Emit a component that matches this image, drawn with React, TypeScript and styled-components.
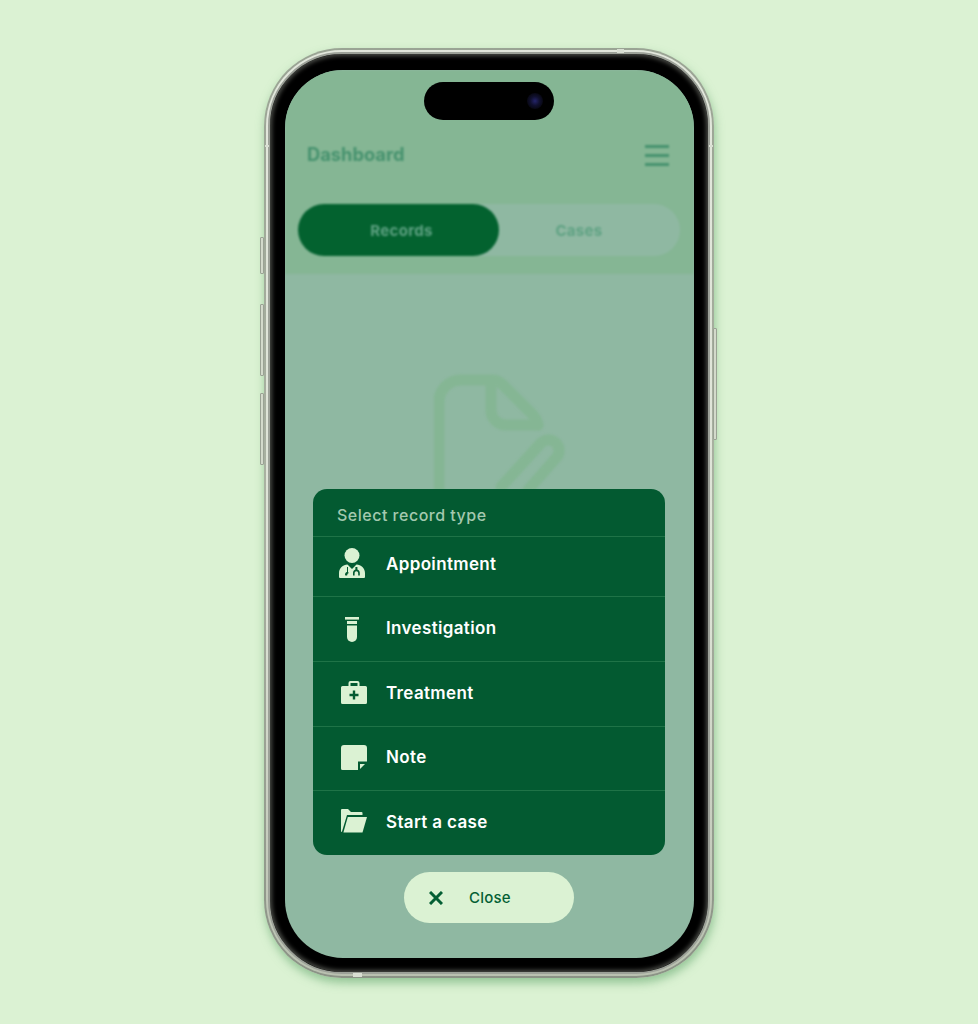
import React from "react";
import styled, { createGlobalStyle } from "styled-components";

const Global = createGlobalStyle`
  html, body {
    margin: 0;
    padding: 0;
    height: 1024px;
    overflow: hidden;
    background: #dbf2d3;
    font-family: Inter, "Noto Sans", sans-serif;
  }
`;

const Page = styled.div`
  width: 978px;
  height: 1024px;
  padding-top: 48px;
  box-sizing: border-box;
  display: flex;
  justify-content: center;
  align-items: flex-start;
`;

const Phone = styled.div`
  position: relative;
  width: 450px;
  height: 930px;
  box-sizing: border-box;
  padding: 2px;
  border-radius: 78px;
  background: linear-gradient(180deg, #9aa494 0%, #aab2a2 50%, #8b9386 100%);
  box-shadow: 1px 5px 10px rgba(90, 160, 100, 0.55);
`;

const Rim = styled.div`
  height: 100%;
  box-sizing: border-box;
  padding: 2px;
  border-radius: 76px;
  background: linear-gradient(180deg, #e2e7dc 0%, #dde3d6 60%, #b9c0b0 100%);
`;

const Bezel = styled.div`
  height: 100%;
  box-sizing: border-box;
  padding: 16px 14px 14px 15px;
  border: 2px solid #9ca198;
  border-radius: 74px;
  background: #000;
  box-shadow: inset 0 0 4px 2px #4a4c47;
`;

const SideButton = styled.div<{ $side: "left" | "right"; $top: number; $h: number }>`
  position: absolute;
  ${({ $side }) => ($side === "left" ? "left: -4px;" : "right: -3px;")}
  top: ${({ $top }) => $top}px;
  width: 4px;
  height: ${({ $h }) => $h}px;
  box-sizing: border-box;
  background: #d3dacb;
  border: 1px solid #9aa294;
  border-radius: 1px;
`;

const AntennaBand = styled.div<{ $x: number; $y: number; $w: number; $h: number }>`
  position: absolute;
  left: ${({ $x }) => $x}px;
  top: ${({ $y }) => $y}px;
  width: ${({ $w }) => $w}px;
  height: ${({ $h }) => $h}px;
  background: #d8ded2;
`;

const Screen = styled.div`
  position: relative;
  height: 100%;
  overflow: hidden;
  border-radius: 58px;
  background: #8fb8a2;
`;

const Blurred = styled.div`
  height: 100%;
  display: flex;
  flex-direction: column;
  filter: blur(1.3px);
`;

const TopArea = styled.div`
  background: #85b694;
  height: 204px;
  box-sizing: border-box;
  padding: 69px 13px 0;
  flex: none;
`;

const TitleRow = styled.div`
  height: 30px;
  padding: 0 12px 0 9px;
  display: flex;
  align-items: center;
  justify-content: space-between;
`;

const Title = styled.div`
  font-size: 18.3px;
  font-weight: 700;
  color: #46926e;
`;

const MenuIcon = styled.div`
  width: 24px;
  height: 21px;
  margin-top: 3px;
  display: flex;
  flex-direction: column;
  justify-content: space-between;
  span {
    display: block;
    height: 3px;
    background: #46926e;
  }
`;

const Tabs = styled.div`
  margin-top: 35px;
  width: 382px;
  height: 52px;
  display: flex;
  border-radius: 26px;
  background: #8fb8a2;
`;

const Tab = styled.div<{ $active?: boolean }>`
  width: ${({ $active }) => ($active ? "201px" : "160px")};
  padding-left: ${({ $active }) => ($active ? "6px" : "0")};
  box-sizing: border-box;
  display: flex;
  align-items: center;
  justify-content: center;
  font-size: 15px;
  font-weight: 700;
  letter-spacing: 0.3px;
  border-radius: 26px;
  color: #5fa283;
  background: ${({ $active }) => ($active ? "#03622f" : "transparent")};
`;

const Empty = styled.div`
  flex: 1;
  display: flex;
  flex-direction: column;
  align-items: center;
  padding-top: 98px;
  padding-left: 38px;
`;

const BehindButton = styled.div`
  width: 150px;
  height: 40px;
  margin-top: 212px;
  margin-left: -38px;
  border-radius: 20px;
  background: #6fa98a;
`;

const Overlay = styled.div`
  position: absolute;
  left: 28px;
  right: 29px;
  top: 419px;
  display: flex;
  flex-direction: column;
  align-items: center;
`;

const Sheet = styled.div`
  width: 100%;
  height: 366px;
  border-radius: 14px;
  background: #035a31;
  display: flex;
  flex-direction: column;
`;

const SheetTitle = styled.div`
  height: 47px;
  padding: 5px 24px 0;
  box-sizing: border-box;
  display: flex;
  align-items: center;
  font-size: 16px;
  font-weight: 500;
  letter-spacing: 0.5px;
  color: #a3c9af;
`;

const Row = styled.div<{ $h: number; $pb: number }>`
  height: ${({ $h }) => $h}px;
  box-sizing: border-box;
  padding: 0 0 ${({ $pb }) => $pb}px 26px;
  border-top: 1px solid #1f7347;
  display: flex;
  align-items: center;
  gap: 19px;
  font-size: 17px;
  font-weight: 600;
  letter-spacing: 0.35px;
  color: #fff;
`;

const IconBox = styled.div<{ $dx: number; $dy: number }>`
  width: 28px;
  height: 32px;
  display: flex;
  align-items: center;
  justify-content: center;
  flex: none;
  transform: translate(${({ $dx }) => $dx}px, ${({ $dy }) => $dy}px);
  svg {
    display: block;
    fill: #dbf2d3;
  }
`;

const CloseButton = styled.button`
  margin-top: 17px;
  width: 170px;
  height: 51px;
  border: 0;
  padding: 0 0 0 25px;
  border-radius: 26px;
  background: #dbf2d3;
  display: flex;
  align-items: center;
  gap: 26px;
  font-family: inherit;
  font-size: 15px;
  font-weight: 500;
  letter-spacing: 0.2px;
  color: #045f34;
`;

const Island = styled.div`
  position: absolute;
  top: 12px;
  left: 139px;
  width: 130px;
  height: 38px;
  border-radius: 19px;
  background: #000;
`;

const Lens = styled.div`
  position: absolute;
  top: 11px;
  right: 11px;
  width: 16px;
  height: 16px;
  border-radius: 50%;
  background: radial-gradient(circle, #24246a 0%, #10102e 40%, #06060f 75%);
`;

const Doctor = () => (
  <svg width="26" height="30" viewBox="0 0 26 30">
    <circle cx="13" cy="7.5" r="7.5" />
    <path
      fillRule="evenodd"
      d="M8.5 16.5 L13 21 L17.5 16.5 C22 17 26 20 26 25 V29 A1 1 0 0 1 25 30 H1 A1 1 0 0 1 0 29 V25 C0 20 4 17 8.5 16.5 Z M8 19 V24 C6.8 24.3 6 25.4 6 26.4 A1.2 1.2 0 0 0 8.4 26.4 C8.4 25.8 8.8 25.4 9.4 25.6 V24 H9 V19 Z M16.4 19 V21.6 C15 22 14 23.4 14 25 V27.5 H15.6 V25.2 C15.6 24 16.4 23.2 17.4 23.2 C18.4 23.2 19.2 24 19.2 25.2 V27.5 H20.8 V25 C20.8 23.4 19.8 22 18.4 21.6 V19 Z"
    />
  </svg>
);

const Tube = () => (
  <svg width="14" height="25" viewBox="0 0 14 25">
    <rect x="0" y="0" width="14" height="2.6" />
    <path d="M2 4 H12 V7 H2 Z" />
    <path d="M2 8.4 H12 V20 A5 5 0 0 1 2 20 Z" />
  </svg>
);

const Kit = () => (
  <svg width="26" height="23" viewBox="0 0 26 23">
    <path
      fillRule="evenodd"
      d="M1.5 5 H7.5 V2 A2 2 0 0 1 9.5 0 H16.5 A2 2 0 0 1 18.5 2 V5 H24.5 A1.5 1.5 0 0 1 26 6.5 V21.5 A1.5 1.5 0 0 1 24.5 23 H1.5 A1.5 1.5 0 0 1 0 21.5 V6.5 A1.5 1.5 0 0 1 1.5 5 Z M9.5 2 V5 H16.5 V2 Z M11.8 9.5 V12.8 H8.5 V15.2 H11.8 V18.5 H14.2 V15.2 H17.5 V12.8 H14.2 V9.5 Z"
    />
  </svg>
);

const Note = () => (
  <svg width="26" height="25" viewBox="0 0 26 25">
    <path d="M3 0 H23 A3 3 0 0 1 26 3 V16.6 H17 V25 H1.5 A1.5 1.5 0 0 1 0 23.5 V3 A3 3 0 0 1 3 0 Z" />
    <path d="M19 19 H24 L19 24 Z" />
  </svg>
);

const FolderOpen = () => (
  <svg width="26" height="24" viewBox="0 0 26 24">
    <path d="M0 1 A1 1 0 0 1 1 0 H7 L10 3 H20.5 A1 1 0 0 1 21.5 4 V6 H6 L1 22.5 L0 23 Z" />
    <path d="M6.8 8 H26 L21.5 23.5 H2.4 Z" />
  </svg>
);

const CloseIcon = () => (
  <svg width="14" height="14" viewBox="0 0 14 14">
    <path d="M1 1 L13 13 M13 1 L1 13" stroke="#045f34" strokeWidth="3" fill="none" />
  </svg>
);

const DocIllustration = () => (
  <svg width="150" height="150" viewBox="0 0 150 150" fill="none" stroke="#85b694" strokeWidth="11" strokeLinecap="round" strokeLinejoin="round">
    <path d="M5 130 V30 A22 22 0 0 1 27 8 H58 C62 8 65 9 68 12 L98 42 C101 45 103 48 104 53" />
    <path d="M57 12 V38 A15 15 0 0 0 72 53 H104" />
    <path d="M67 115 L107 71 A10.5 10.5 0 0 1 122 86 L94 118" />
  </svg>
);

const rows = [
  { label: "Appointment", h: 60, pb: 5, dx: -1, dy: -1, icon: <Doctor /> },
  { label: "Investigation", h: 65, pb: 3, dx: -1, dy: 2, icon: <Tube /> },
  { label: "Treatment", h: 65, pb: 3, dx: 1, dy: 0, icon: <Kit /> },
  { label: "Note", h: 64, pb: 3, dx: 1, dy: 0, icon: <Note /> },
  { label: "Start a case", h: 65, pb: 3, dx: 1, dy: -1, icon: <FolderOpen /> },
];

export default function App() {
  return (
    <>
      <Global />
      <Page>
        <Phone>
          <SideButton $side="left" $top={189} $h={37} />
          <SideButton $side="left" $top={256} $h={72} />
          <SideButton $side="left" $top={345} $h={72} />
          <SideButton $side="right" $top={280} $h={112} />
          <AntennaBand $x={353} $y={1} $w={7} $h={4} />
          <AntennaBand $x={89} $y={925} $w={9} $h={4} />
          <AntennaBand $x={1} $y={97} $w={4} $h={2} />
          <AntennaBand $x={445} $y={97} $w={4} $h={2} />
          <Rim>
            <Bezel>
              <Screen>
                <Blurred>
                  <TopArea>
                    <TitleRow>
                      <Title>Dashboard</Title>
                      <MenuIcon>
                        <span />
                        <span />
                        <span />
                      </MenuIcon>
                    </TitleRow>
                    <Tabs>
                      <Tab $active>Records</Tab>
                      <Tab>Cases</Tab>
                    </Tabs>
                  </TopArea>
                  <Empty>
                    <DocIllustration />
                    <BehindButton />
                  </Empty>
                </Blurred>
                <Island>
                  <Lens />
                </Island>
                <Overlay>
                  <Sheet>
                    <SheetTitle>Select record type</SheetTitle>
                    {rows.map((row) => (
                      <Row key={row.label} $h={row.h} $pb={row.pb}>
                        <IconBox $dx={row.dx} $dy={row.dy}>{row.icon}</IconBox>
                        {row.label}
                      </Row>
                    ))}
                  </Sheet>
                  <CloseButton>
                    <CloseIcon />
                    Close
                  </CloseButton>
                </Overlay>
              </Screen>
            </Bezel>
          </Rim>
        </Phone>
      </Page>
    </>
  );
}
